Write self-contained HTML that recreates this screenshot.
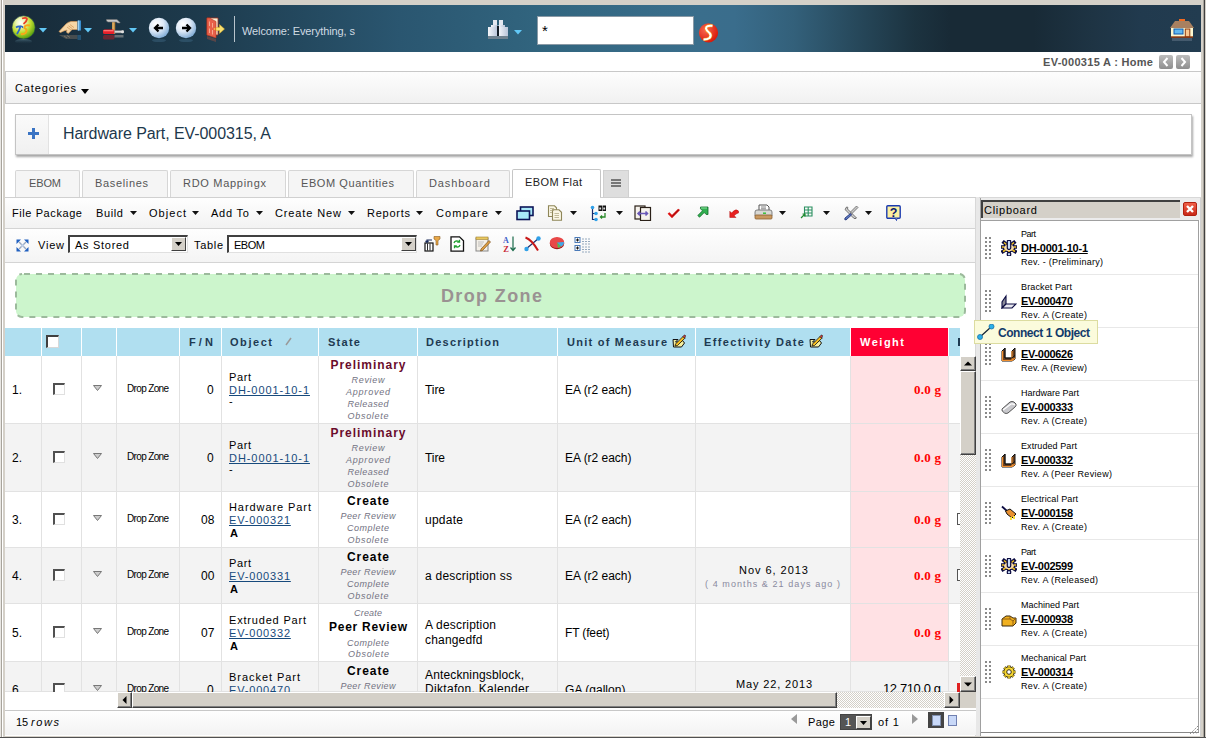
<!DOCTYPE html><html><head><meta charset="utf-8"><style>*{margin:0;padding:0;box-sizing:border-box}html,body{width:1206px;height:738px;overflow:hidden;background:#d4d0c8;position:relative;font-family:"Liberation Sans",sans-serif}.a{position:absolute}.t{white-space:nowrap}</style></head><body>
<div class="a" style="left:0px;top:0px;width:1206px;height:738px;background:#d4d0c8"></div>
<div class="a" style="left:0px;top:0px;width:1px;height:738px;background:#e8e6e2"></div>
<div class="a" style="left:1px;top:0px;width:1px;height:738px;background:#a8a49c"></div>
<div class="a" style="left:2px;top:0px;width:1px;height:738px;background:#fff"></div>
<div class="a" style="left:1203px;top:0px;width:1px;height:738px;background:#a8a49c"></div>
<div class="a" style="left:1204px;top:0px;width:1px;height:738px;background:#404040"></div>
<div class="a" style="left:0px;top:737px;width:1206px;height:1px;background:#505050"></div>
<div class="a" style="left:5px;top:5px;width:1196px;height:47px;background:linear-gradient(90deg,#172a38 0%,#1d3a4c 16%,#2a5670 33%,#326680 46%,#3a6e8c 58%,#3a6d8c 61%,#33607a 66%,#27495c 71%,#1c3340 76%,#182a36 79%,#182a36 86%,#1e3444 91%,#213a4e 95%,#223c50 100%)"></div>
<div class="a" style="left:5px;top:52px;width:1196px;height:684px;background:#fff"></div>
<div class="a" style="left:5px;top:71px;width:1196px;height:33px;background:linear-gradient(#fdfdfd,#f1f1f1);border:1px solid #c8c8c8;border-right:none"></div>
<div class="a" style="left:15px;top:114px;width:1177px;height:41px;background:#fff;border:1px solid #c4c4c4;box-shadow:1px 2px 2px rgba(0,0,0,.35)"></div>
<div class="a" style="left:16px;top:115px;width:33px;height:39px;background:linear-gradient(#fafafa,#f0f0f0);border-right:1px solid #e2e2e2"></div>
<div class="a" style="left:15px;top:170px;width:65px;height:28px;background:#f5f5f5;border:1px solid #d6d6d6;border-bottom:none;border-radius:2px 2px 0 0"></div>
<div class="a" style="left:82px;top:170px;width:86px;height:28px;background:#f5f5f5;border:1px solid #d6d6d6;border-bottom:none;border-radius:2px 2px 0 0"></div>
<div class="a" style="left:170px;top:170px;width:116px;height:28px;background:#f5f5f5;border:1px solid #d6d6d6;border-bottom:none;border-radius:2px 2px 0 0"></div>
<div class="a" style="left:288px;top:170px;width:126px;height:28px;background:#f5f5f5;border:1px solid #d6d6d6;border-bottom:none;border-radius:2px 2px 0 0"></div>
<div class="a" style="left:416px;top:170px;width:94px;height:28px;background:#f5f5f5;border:1px solid #d6d6d6;border-bottom:none;border-radius:2px 2px 0 0"></div>
<div class="a" style="left:512px;top:169px;width:89px;height:29px;background:#fff;border:1px solid #c6c6c6;border-bottom:none;border-radius:2px 2px 0 0"></div>
<div class="a" style="left:603px;top:170px;width:26px;height:28px;background:#dedede;border:1px solid #d0d0d0;border-bottom:none"></div>
<div class="a" style="left:5px;top:197px;width:972px;height:1px;background:#d0d0d0"></div>
<div class="a" style="left:5px;top:198px;width:971px;height:31px;background:linear-gradient(#fefefe,#f2f2f2)"></div>
<div class="a" style="left:5px;top:228px;width:971px;height:1px;background:#d4d4d4"></div>
<div class="a" style="left:5px;top:229px;width:971px;height:33px;background:linear-gradient(#fefefe,#f4f4f4)"></div>
<div class="a" style="left:5px;top:262px;width:971px;height:1px;background:#d4d4d4"></div>
<div class="a" style="left:975px;top:198px;width:1px;height:538px;background:#d8d8d8"></div>
<svg class="a" style="left:15px;top:273px" width="951" height="45"><rect x="1" y="1" width="949" height="43" rx="6" fill="#ccf5cc" stroke="#9cba9c" stroke-width="2" stroke-dasharray="6 6" stroke-dashoffset="-2"/></svg>
<div class="a" style="left:5px;top:328px;width:955px;height:28px;background:#b0dff0"></div>
<div class="a" style="left:41px;top:328px;width:1px;height:28px;background:#fff"></div>
<div class="a" style="left:81px;top:328px;width:1px;height:28px;background:#fff"></div>
<div class="a" style="left:116px;top:328px;width:1px;height:28px;background:#fff"></div>
<div class="a" style="left:179px;top:328px;width:1px;height:28px;background:#fff"></div>
<div class="a" style="left:221px;top:328px;width:1px;height:28px;background:#fff"></div>
<div class="a" style="left:318px;top:328px;width:1px;height:28px;background:#fff"></div>
<div class="a" style="left:417px;top:328px;width:1px;height:28px;background:#fff"></div>
<div class="a" style="left:557px;top:328px;width:1px;height:28px;background:#fff"></div>
<div class="a" style="left:695px;top:328px;width:1px;height:28px;background:#fff"></div>
<div class="a" style="left:850px;top:328px;width:1px;height:28px;background:#fff"></div>
<div class="a" style="left:851px;top:328px;width:97px;height:28px;background:#ff0033"></div>
<div class="a" style="left:948px;top:328px;width:1px;height:28px;background:#fff"></div>
<div class="a" style="left:5px;top:356px;width:955px;height:68px;background:#fff"></div>
<div class="a" style="left:5px;top:423px;width:955px;height:1px;background:#e2e2e2"></div>
<div class="a" style="left:5px;top:424px;width:955px;height:68px;background:#f3f3f3"></div>
<div class="a" style="left:5px;top:491px;width:955px;height:1px;background:#e2e2e2"></div>
<div class="a" style="left:5px;top:492px;width:955px;height:56px;background:#fff"></div>
<div class="a" style="left:5px;top:547px;width:955px;height:1px;background:#e2e2e2"></div>
<div class="a" style="left:5px;top:548px;width:955px;height:56px;background:#f3f3f3"></div>
<div class="a" style="left:5px;top:603px;width:955px;height:1px;background:#e2e2e2"></div>
<div class="a" style="left:5px;top:604px;width:955px;height:58px;background:#fff"></div>
<div class="a" style="left:5px;top:661px;width:955px;height:1px;background:#e2e2e2"></div>
<div class="a" style="left:5px;top:662px;width:955px;height:30px;background:#f3f3f3"></div>
<div class="a" style="left:5px;top:691px;width:955px;height:1px;background:#e2e2e2"></div>
<div class="a" style="left:850px;top:356px;width:99px;height:67px;background:#ffe1e4"></div>
<div class="a" style="left:850px;top:424px;width:99px;height:67px;background:#ffe1e4"></div>
<div class="a" style="left:850px;top:492px;width:99px;height:55px;background:#ffe1e4"></div>
<div class="a" style="left:850px;top:548px;width:99px;height:55px;background:#ffe1e4"></div>
<div class="a" style="left:850px;top:604px;width:99px;height:57px;background:#ffe1e4"></div>
<div class="a" style="left:41px;top:356px;width:1px;height:336px;background:#e2e2e2"></div>
<div class="a" style="left:81px;top:356px;width:1px;height:336px;background:#e2e2e2"></div>
<div class="a" style="left:116px;top:356px;width:1px;height:336px;background:#e2e2e2"></div>
<div class="a" style="left:179px;top:356px;width:1px;height:336px;background:#e2e2e2"></div>
<div class="a" style="left:221px;top:356px;width:1px;height:336px;background:#e2e2e2"></div>
<div class="a" style="left:318px;top:356px;width:1px;height:336px;background:#e2e2e2"></div>
<div class="a" style="left:417px;top:356px;width:1px;height:336px;background:#e2e2e2"></div>
<div class="a" style="left:557px;top:356px;width:1px;height:336px;background:#e2e2e2"></div>
<div class="a" style="left:695px;top:356px;width:1px;height:336px;background:#e2e2e2"></div>
<div class="a" style="left:850px;top:356px;width:1px;height:336px;background:#e2e2e2"></div>
<div class="a" style="left:948px;top:356px;width:1px;height:336px;background:#e2e2e2"></div>
<div class="a" style="left:976px;top:197px;width:4px;height:539px;background:#e8e8e8"></div>
<div class="a" style="left:979px;top:197px;width:222px;height:1px;background:#d8d8d8"></div>
<div class="a" style="left:980px;top:198px;width:1px;height:538px;background:#a0a0a0"></div>
<div class="a" style="left:981px;top:198px;width:219px;height:22px;background:#ececec"></div>
<div class="a" style="left:981px;top:200px;width:199px;height:18px;background:#d4d0c8;border-top:2px solid #404040;border-left:2px solid #404040"></div>
<div class="a" style="left:981px;top:220px;width:218px;height:513px;background:#fff;border-top:1px solid #a0a0a0"></div>
<div class="a" style="left:1198px;top:220px;width:1px;height:513px;background:#a0a0a0"></div>
<div class="a" style="left:981px;top:732px;width:218px;height:1px;background:#888"></div>
<div class="a" style="left:1200px;top:198px;width:1px;height:538px;background:#d0d0d0"></div>
<div class="a" style="left:981px;top:274px;width:217px;height:1px;background:#e8e8e8"></div>
<div class="a" style="left:981px;top:327px;width:217px;height:1px;background:#e8e8e8"></div>
<div class="a" style="left:981px;top:380px;width:217px;height:1px;background:#e8e8e8"></div>
<div class="a" style="left:981px;top:433px;width:217px;height:1px;background:#e8e8e8"></div>
<div class="a" style="left:981px;top:486px;width:217px;height:1px;background:#e8e8e8"></div>
<div class="a" style="left:981px;top:539px;width:217px;height:1px;background:#e8e8e8"></div>
<div class="a" style="left:981px;top:592px;width:217px;height:1px;background:#e8e8e8"></div>
<div class="a" style="left:981px;top:645px;width:217px;height:1px;background:#e8e8e8"></div>
<div class="a" style="left:981px;top:698px;width:217px;height:1px;background:#e8e8e8"></div>
<div class="a t" id="t0" style="left:242px;top:26px;font:normal normal 11px/1 'Liberation Sans';color:#d0dae2;letter-spacing:-0.112px;">Welcome: Everything, s</div>
<div class="a" style="left:234px;top:16px;width:1px;height:26px;background:#b8c4cc"></div>
<div class="a" style="left:537px;top:16px;width:157px;height:29px;background:#fff;border:1px solid #8a9aa6"></div>
<div class="a t" id="t1" style="left:542px;top:23px;font:normal normal 15px/1 'Liberation Sans';color:#000;">*</div>
<div class="a t" id="t2" style="left:1043px;top:57px;font:normal bold 11px/1 'Liberation Sans';color:#555;letter-spacing:0.296px;">EV-000315 A : Home</div>
<div class="a" style="left:1159px;top:55px;width:14px;height:14px;background:linear-gradient(#bdbdbd,#8e8e8e);border-radius:2px"></div>
<div class="a" style="left:1176px;top:55px;width:14px;height:14px;background:linear-gradient(#bdbdbd,#8e8e8e);border-radius:2px"></div>
<div class="a t" id="t3" style="left:15px;top:83px;font:normal normal 11px/1 'Liberation Sans';color:#000;letter-spacing:0.866px;">Categories</div>
<svg class="a" style="left:81px;top:89px" width="8" height="5"><path d="M0 0H8L4 5Z" fill="#000"/></svg>
<svg class="a" style="left:28px;top:128px" width="11" height="11"><path d="M4 0H7V4H11V7H7V11H4V7H0V4H4Z" fill="#3a74c4"/></svg>
<div class="a t" id="t4" style="left:63px;top:126px;font:normal normal 16px/1 'Liberation Sans';color:#1d384c;letter-spacing:-0.073px;">Hardware Part, EV-000315, A</div>
<div class="a t" id="t5" style="left:29px;top:178px;font:normal normal 11px/1 'Liberation Sans';color:#555;letter-spacing:-0.135px;">EBOM</div>
<div class="a t" id="t6" style="left:95px;top:178px;font:normal normal 11px/1 'Liberation Sans';color:#555;letter-spacing:0.662px;">Baselines</div>
<div class="a t" id="t7" style="left:183px;top:178px;font:normal normal 11px/1 'Liberation Sans';color:#555;letter-spacing:0.709px;">RDO Mappingx</div>
<div class="a t" id="t8" style="left:301px;top:178px;font:normal normal 11px/1 'Liberation Sans';color:#555;letter-spacing:0.573px;">EBOM Quantities</div>
<div class="a t" id="t9" style="left:429px;top:178px;font:normal normal 11px/1 'Liberation Sans';color:#555;letter-spacing:0.896px;">Dashboard</div>
<div class="a t" id="t10" style="left:525px;top:177px;font:normal normal 11px/1 'Liberation Sans';color:#222;letter-spacing:0.400px;">EBOM Flat</div>
<div class="a" style="left:611px;top:179px;width:10px;height:2px;background:#777"></div>
<div class="a" style="left:611px;top:182px;width:10px;height:2px;background:#777"></div>
<div class="a" style="left:611px;top:185px;width:10px;height:2px;background:#777"></div>
<div class="a" style="left:513px;top:197px;width:87px;height:1px;background:#fff"></div>
<div class="a t" id="t11" style="left:12px;top:208px;font:normal normal 11px/1 'Liberation Sans';color:#000;letter-spacing:0.582px;">File Package</div>
<div class="a t" id="t12" style="left:96px;top:208px;font:normal normal 11px/1 'Liberation Sans';color:#000;letter-spacing:0.633px;">Build</div>
<svg class="a" style="left:130px;top:211px" width="7" height="4"><path d="M0 0H7L3.5 4Z" fill="#111"/></svg>
<div class="a t" id="t13" style="left:149px;top:208px;font:normal normal 11px/1 'Liberation Sans';color:#000;letter-spacing:1.041px;">Object</div>
<svg class="a" style="left:192px;top:211px" width="7" height="4"><path d="M0 0H7L3.5 4Z" fill="#111"/></svg>
<div class="a t" id="t14" style="left:211px;top:208px;font:normal normal 11px/1 'Liberation Sans';color:#000;letter-spacing:0.787px;">Add To</div>
<svg class="a" style="left:256px;top:211px" width="7" height="4"><path d="M0 0H7L3.5 4Z" fill="#111"/></svg>
<div class="a t" id="t15" style="left:275px;top:208px;font:normal normal 11px/1 'Liberation Sans';color:#000;letter-spacing:0.880px;">Create New</div>
<svg class="a" style="left:348px;top:211px" width="7" height="4"><path d="M0 0H7L3.5 4Z" fill="#111"/></svg>
<div class="a t" id="t16" style="left:367px;top:208px;font:normal normal 11px/1 'Liberation Sans';color:#000;letter-spacing:0.745px;">Reports</div>
<svg class="a" style="left:416px;top:211px" width="7" height="4"><path d="M0 0H7L3.5 4Z" fill="#111"/></svg>
<div class="a t" id="t17" style="left:436px;top:208px;font:normal normal 11px/1 'Liberation Sans';color:#000;letter-spacing:1.125px;">Compare</div>
<svg class="a" style="left:495px;top:211px" width="7" height="4"><path d="M0 0H7L3.5 4Z" fill="#111"/></svg>
<svg class="a" style="left:570px;top:211px" width="7" height="4"><path d="M0 0H7L3.5 4Z" fill="#111"/></svg>
<svg class="a" style="left:616px;top:211px" width="7" height="4"><path d="M0 0H7L3.5 4Z" fill="#111"/></svg>
<svg class="a" style="left:779px;top:211px" width="7" height="4"><path d="M0 0H7L3.5 4Z" fill="#111"/></svg>
<svg class="a" style="left:823px;top:211px" width="7" height="4"><path d="M0 0H7L3.5 4Z" fill="#111"/></svg>
<svg class="a" style="left:865px;top:211px" width="7" height="4"><path d="M0 0H7L3.5 4Z" fill="#111"/></svg>
<div class="a t" id="t18" style="left:38px;top:240px;font:normal normal 11px/1 'Liberation Sans';color:#000;letter-spacing:0.781px;">View</div>
<div class="a" style="left:68px;top:235px;width:120px;height:18px;background:#fff;border-style:solid;border-width:2px 1px 1px 2px;border-color:#404040 #e0e0e0 #e0e0e0 #404040"></div>
<div class="a t" id="t19" style="left:75px;top:240px;font:normal normal 11px/1 'Liberation Sans';color:#000;letter-spacing:0.711px;">As Stored</div>
<div class="a" style="left:171px;top:237px;width:15px;height:14px;background:#d4d0c8;border:1px solid;border-color:#fff #404040 #404040 #fff"></div>
<svg class="a" style="left:175px;top:242px" width="7" height="4"><path d="M0 0H7L3.5 4Z" fill="#000"/></svg>
<div class="a t" id="t20" style="left:194px;top:240px;font:normal normal 11px/1 'Liberation Sans';color:#000;letter-spacing:0.676px;">Table</div>
<div class="a" style="left:227px;top:235px;width:190px;height:18px;background:#fff;border-style:solid;border-width:2px 1px 1px 2px;border-color:#404040 #e0e0e0 #e0e0e0 #404040"></div>
<div class="a t" id="t21" style="left:234px;top:240px;font:normal normal 11px/1 'Liberation Sans';color:#000;letter-spacing:-0.469px;">EBOM</div>
<div class="a" style="left:401px;top:237px;width:15px;height:14px;background:#d4d0c8;border:1px solid;border-color:#fff #404040 #404040 #fff"></div>
<svg class="a" style="left:405px;top:242px" width="7" height="4"><path d="M0 0H7L3.5 4Z" fill="#000"/></svg>
<div class="a t" id="t22" style="left:441px;top:287px;font:normal bold 18px/1 'Liberation Sans';color:#9a9292;letter-spacing:1.375px;">Drop Zone</div>
<div class="a" style="left:46px;top:335px;width:13px;height:13px;background:#fff;border-style:solid;border-width:2px 1px 1px 2px;border-color:#404040 #d8d8d8 #d8d8d8 #404040"></div>
<div class="a t" id="t23" style="left:189px;top:337px;font:normal bold 11px/1 'Liberation Sans';color:#1e3a52;letter-spacing:3.133px;">F/N</div>
<div class="a t" id="t24" style="left:230px;top:337px;font:normal bold 11px/1 'Liberation Sans';color:#1e3a52;letter-spacing:1.553px;">Object</div>
<div class="a t" id="t25" style="left:328px;top:337px;font:normal bold 11px/1 'Liberation Sans';color:#1e3a52;letter-spacing:1.273px;">State</div>
<div class="a t" id="t26" style="left:426px;top:337px;font:normal bold 11px/1 'Liberation Sans';color:#1e3a52;letter-spacing:1.248px;">Description</div>
<div class="a t" id="t27" style="left:567px;top:337px;font:normal bold 11px/1 'Liberation Sans';color:#1e3a52;letter-spacing:1.249px;">Unit of Measure</div>
<div class="a t" id="t28" style="left:704px;top:337px;font:normal bold 11px/1 'Liberation Sans';color:#1e3a52;letter-spacing:1.368px;">Effectivity Date</div>
<div class="a t" id="t29" style="left:860px;top:337px;font:normal bold 11px/1 'Liberation Sans';color:#fff;letter-spacing:1.506px;">Weight</div>
<svg class="a" style="left:285px;top:337px" width="7" height="9"><path d="M1 8L6 1" stroke="#999" stroke-width="1.5"/></svg>
<div class="a t" id="t30" style="left:12px;top:384px;font:normal normal 12px/1 'Liberation Sans';color:#000;">1.</div>
<div class="a" style="left:53px;top:383px;width:12px;height:12px;background:#fff;border-style:solid;border-width:2px 1px 1px 2px;border-color:#505050 #e0e0e0 #e0e0e0 #505050"></div>
<svg class="a" style="left:93px;top:385px" width="9" height="6"><path d="M0.5 0.5H8.5L4.5 5.5Z" fill="#ccc" stroke="#777"/></svg>
<div class="a t" id="t31" style="left:127px;top:384px;font:normal normal 10px/1 'Liberation Sans';color:#000;letter-spacing:-0.656px;">Drop Zone</div>
<div class="a t" id="t32" style="left:207px;top:384px;font:normal normal 12px/1 'Liberation Sans';color:#000;">0</div>
<div class="a t" id="t33" style="left:229px;top:372px;font:normal normal 11px/1 'Liberation Sans';color:#000;letter-spacing:0.604px;">Part</div>
<div class="a t" id="t34" style="left:229px;top:385px;font:normal normal 11px/1 'Liberation Sans';color:#174a7c;letter-spacing:0.936px;text-decoration:underline;">DH-0001-10-1</div>
<div class="a t" id="t35" style="left:229px;top:396px;font:normal normal 11px/1 'Liberation Sans';color:#000;">-</div>
<div class="a t" id="t36" style="left:425px;top:384px;font:normal normal 12px/1 'Liberation Sans';color:#000;letter-spacing:-0.078px;">Tire</div>
<div class="a t" id="t37" style="left:565px;top:384px;font:normal normal 12px/1 'Liberation Sans';color:#000;letter-spacing:-0.018px;">EA (r2 each)</div>
<div class="a t" id="t38" style="left:914px;top:383px;font:normal bold 13px/1 'Liberation Serif';color:#f00;letter-spacing:0.250px;">0.0 g</div>
<div class="a t" id="t39" style="left:12px;top:452px;font:normal normal 12px/1 'Liberation Sans';color:#000;">2.</div>
<div class="a" style="left:53px;top:451px;width:12px;height:12px;background:#fff;border-style:solid;border-width:2px 1px 1px 2px;border-color:#505050 #e0e0e0 #e0e0e0 #505050"></div>
<svg class="a" style="left:93px;top:453px" width="9" height="6"><path d="M0.5 0.5H8.5L4.5 5.5Z" fill="#ccc" stroke="#777"/></svg>
<div class="a t" id="t40" style="left:127px;top:452px;font:normal normal 10px/1 'Liberation Sans';color:#000;letter-spacing:-0.656px;">Drop Zone</div>
<div class="a t" id="t41" style="left:207px;top:452px;font:normal normal 12px/1 'Liberation Sans';color:#000;">0</div>
<div class="a t" id="t42" style="left:229px;top:440px;font:normal normal 11px/1 'Liberation Sans';color:#000;letter-spacing:0.604px;">Part</div>
<div class="a t" id="t43" style="left:229px;top:453px;font:normal normal 11px/1 'Liberation Sans';color:#174a7c;letter-spacing:0.936px;text-decoration:underline;">DH-0001-10-1</div>
<div class="a t" id="t44" style="left:229px;top:464px;font:normal normal 11px/1 'Liberation Sans';color:#000;">-</div>
<div class="a t" id="t45" style="left:425px;top:452px;font:normal normal 12px/1 'Liberation Sans';color:#000;letter-spacing:-0.078px;">Tire</div>
<div class="a t" id="t46" style="left:565px;top:452px;font:normal normal 12px/1 'Liberation Sans';color:#000;letter-spacing:-0.018px;">EA (r2 each)</div>
<div class="a t" id="t47" style="left:914px;top:451px;font:normal bold 13px/1 'Liberation Serif';color:#f00;letter-spacing:0.250px;">0.0 g</div>
<div class="a t" id="t48" style="left:12px;top:514px;font:normal normal 12px/1 'Liberation Sans';color:#000;">3.</div>
<div class="a" style="left:53px;top:513px;width:12px;height:12px;background:#fff;border-style:solid;border-width:2px 1px 1px 2px;border-color:#505050 #e0e0e0 #e0e0e0 #505050"></div>
<svg class="a" style="left:93px;top:515px" width="9" height="6"><path d="M0.5 0.5H8.5L4.5 5.5Z" fill="#ccc" stroke="#777"/></svg>
<div class="a t" id="t49" style="left:127px;top:514px;font:normal normal 10px/1 'Liberation Sans';color:#000;letter-spacing:-0.656px;">Drop Zone</div>
<div class="a t" id="t50" style="left:201px;top:514px;font:normal normal 12px/1 'Liberation Sans';color:#000;">08</div>
<div class="a t" id="t51" style="left:229px;top:502px;font:normal normal 11px/1 'Liberation Sans';color:#000;letter-spacing:0.923px;">Hardware Part</div>
<div class="a t" id="t52" style="left:229px;top:515px;font:normal normal 11px/1 'Liberation Sans';color:#174a7c;letter-spacing:0.820px;text-decoration:underline;">EV-000321</div>
<div class="a t" id="t53" style="left:230px;top:528px;font:normal bold 11px/1 'Liberation Sans';color:#000;">A</div>
<div class="a t" id="t54" style="left:425px;top:514px;font:normal normal 12px/1 'Liberation Sans';color:#000;letter-spacing:0.259px;">update</div>
<div class="a t" id="t55" style="left:565px;top:514px;font:normal normal 12px/1 'Liberation Sans';color:#000;letter-spacing:-0.018px;">EA (r2 each)</div>
<div class="a t" id="t56" style="left:914px;top:513px;font:normal bold 13px/1 'Liberation Serif';color:#f00;letter-spacing:0.250px;">0.0 g</div>
<div class="a t" id="t57" style="left:12px;top:570px;font:normal normal 12px/1 'Liberation Sans';color:#000;">4.</div>
<div class="a" style="left:53px;top:569px;width:12px;height:12px;background:#fff;border-style:solid;border-width:2px 1px 1px 2px;border-color:#505050 #e0e0e0 #e0e0e0 #505050"></div>
<svg class="a" style="left:93px;top:571px" width="9" height="6"><path d="M0.5 0.5H8.5L4.5 5.5Z" fill="#ccc" stroke="#777"/></svg>
<div class="a t" id="t58" style="left:127px;top:570px;font:normal normal 10px/1 'Liberation Sans';color:#000;letter-spacing:-0.656px;">Drop Zone</div>
<div class="a t" id="t59" style="left:201px;top:570px;font:normal normal 12px/1 'Liberation Sans';color:#000;">00</div>
<div class="a t" id="t60" style="left:229px;top:558px;font:normal normal 11px/1 'Liberation Sans';color:#000;letter-spacing:0.604px;">Part</div>
<div class="a t" id="t61" style="left:229px;top:571px;font:normal normal 11px/1 'Liberation Sans';color:#174a7c;letter-spacing:0.820px;text-decoration:underline;">EV-000331</div>
<div class="a t" id="t62" style="left:230px;top:584px;font:normal bold 11px/1 'Liberation Sans';color:#000;">A</div>
<div class="a t" id="t63" style="left:425px;top:570px;font:normal normal 12px/1 'Liberation Sans';color:#000;letter-spacing:0.242px;">a description ss</div>
<div class="a t" id="t64" style="left:565px;top:570px;font:normal normal 12px/1 'Liberation Sans';color:#000;letter-spacing:-0.018px;">EA (r2 each)</div>
<div class="a t" id="t65" style="left:914px;top:569px;font:normal bold 13px/1 'Liberation Serif';color:#f00;letter-spacing:0.250px;">0.0 g</div>
<div class="a t" id="t66" style="left:12px;top:627px;font:normal normal 12px/1 'Liberation Sans';color:#000;">5.</div>
<div class="a" style="left:53px;top:626px;width:12px;height:12px;background:#fff;border-style:solid;border-width:2px 1px 1px 2px;border-color:#505050 #e0e0e0 #e0e0e0 #505050"></div>
<svg class="a" style="left:93px;top:628px" width="9" height="6"><path d="M0.5 0.5H8.5L4.5 5.5Z" fill="#ccc" stroke="#777"/></svg>
<div class="a t" id="t67" style="left:127px;top:627px;font:normal normal 10px/1 'Liberation Sans';color:#000;letter-spacing:-0.656px;">Drop Zone</div>
<div class="a t" id="t68" style="left:201px;top:627px;font:normal normal 12px/1 'Liberation Sans';color:#000;">07</div>
<div class="a t" id="t69" style="left:229px;top:615px;font:normal normal 11px/1 'Liberation Sans';color:#000;letter-spacing:0.811px;">Extruded Part</div>
<div class="a t" id="t70" style="left:229px;top:628px;font:normal normal 11px/1 'Liberation Sans';color:#174a7c;letter-spacing:0.820px;text-decoration:underline;">EV-000332</div>
<div class="a t" id="t71" style="left:230px;top:641px;font:normal bold 11px/1 'Liberation Sans';color:#000;">A</div>
<div class="a t" id="t72" style="left:425px;top:619px;font:normal normal 12px/1 'Liberation Sans';color:#000;letter-spacing:0.190px;">A description</div>
<div class="a t" id="t73" style="left:425px;top:633.5px;font:normal normal 12px/1 'Liberation Sans';color:#000;letter-spacing:0.180px;">changedfd</div>
<div class="a t" id="t74" style="left:565px;top:627px;font:normal normal 12px/1 'Liberation Sans';color:#000;letter-spacing:-0.150px;">FT (feet)</div>
<div class="a t" id="t75" style="left:914px;top:626px;font:normal bold 13px/1 'Liberation Serif';color:#f00;letter-spacing:0.250px;">0.0 g</div>
<div class="a t" id="t76" style="left:12px;top:684px;font:normal normal 12px/1 'Liberation Sans';color:#000;">6.</div>
<div class="a" style="left:53px;top:683px;width:12px;height:12px;background:#fff;border-style:solid;border-width:2px 1px 1px 2px;border-color:#505050 #e0e0e0 #e0e0e0 #505050"></div>
<svg class="a" style="left:93px;top:685px" width="9" height="6"><path d="M0.5 0.5H8.5L4.5 5.5Z" fill="#ccc" stroke="#777"/></svg>
<div class="a t" id="t77" style="left:127px;top:684px;font:normal normal 10px/1 'Liberation Sans';color:#000;letter-spacing:-0.656px;">Drop Zone</div>
<div class="a t" id="t78" style="left:207px;top:684px;font:normal normal 12px/1 'Liberation Sans';color:#000;">0</div>
<div class="a t" id="t79" style="left:229px;top:672px;font:normal normal 11px/1 'Liberation Sans';color:#000;letter-spacing:0.952px;">Bracket Part</div>
<div class="a t" id="t80" style="left:229px;top:685px;font:normal normal 11px/1 'Liberation Sans';color:#174a7c;letter-spacing:0.820px;text-decoration:underline;">EV-000470</div>
<div class="a t" id="t81" style="left:230px;top:698px;font:normal bold 11px/1 'Liberation Sans';color:#000;">A</div>
<div class="a t" id="t82" style="left:425px;top:669px;font:normal normal 12px/1 'Liberation Sans';color:#000;letter-spacing:0.142px;">Anteckningsblock,</div>
<div class="a t" id="t83" style="left:425px;top:683px;font:normal normal 12px/1 'Liberation Sans';color:#000;letter-spacing:0.310px;">Diktafon, Kalender</div>
<div class="a t" id="t84" style="left:565px;top:684px;font:normal normal 12px/1 'Liberation Sans';color:#000;letter-spacing:0.047px;">GA (gallon)</div>
<div class="a t" id="t85" style="left:883px;top:682px;font:normal normal 13px/1 'Liberation Sans';color:#000;letter-spacing:-0.384px;">12 710.0 g</div>
<div class="a t" id="t86" style="left:330.5px;top:359px;font:normal bold 12px/1 'Liberation Sans';color:#6a0c2c;letter-spacing:0.963px;">Preliminary</div>
<div class="a t" id="t87" style="left:351.5px;top:376px;font:italic normal 9px/1 'Liberation Sans';color:#727282;letter-spacing:0.697px;">Review</div>
<div class="a t" id="t88" style="left:346.0px;top:388px;font:italic normal 9px/1 'Liberation Sans';color:#727282;letter-spacing:0.781px;">Approved</div>
<div class="a t" id="t89" style="left:347.5px;top:400px;font:italic normal 9px/1 'Liberation Sans';color:#727282;letter-spacing:0.424px;">Released</div>
<div class="a t" id="t90" style="left:347.5px;top:412px;font:italic normal 9px/1 'Liberation Sans';color:#727282;letter-spacing:0.710px;">Obsolete</div>
<div class="a t" id="t91" style="left:330.5px;top:427px;font:normal bold 12px/1 'Liberation Sans';color:#6a0c2c;letter-spacing:0.963px;">Preliminary</div>
<div class="a t" id="t92" style="left:351.5px;top:444px;font:italic normal 9px/1 'Liberation Sans';color:#727282;letter-spacing:0.697px;">Review</div>
<div class="a t" id="t93" style="left:346.0px;top:456px;font:italic normal 9px/1 'Liberation Sans';color:#727282;letter-spacing:0.781px;">Approved</div>
<div class="a t" id="t94" style="left:347.5px;top:468px;font:italic normal 9px/1 'Liberation Sans';color:#727282;letter-spacing:0.424px;">Released</div>
<div class="a t" id="t95" style="left:347.5px;top:480px;font:italic normal 9px/1 'Liberation Sans';color:#727282;letter-spacing:0.710px;">Obsolete</div>
<div class="a t" id="t96" style="left:347.0px;top:495px;font:normal bold 12px/1 'Liberation Sans';color:#000;letter-spacing:0.928px;">Create</div>
<div class="a t" id="t97" style="left:340.5px;top:512px;font:italic normal 9px/1 'Liberation Sans';color:#727282;letter-spacing:0.397px;">Peer Review</div>
<div class="a t" id="t98" style="left:347.0px;top:524px;font:italic normal 9px/1 'Liberation Sans';color:#727282;letter-spacing:0.496px;">Complete</div>
<div class="a t" id="t99" style="left:347.5px;top:536px;font:italic normal 9px/1 'Liberation Sans';color:#727282;letter-spacing:0.710px;">Obsolete</div>
<div class="a t" id="t100" style="left:347.0px;top:551px;font:normal bold 12px/1 'Liberation Sans';color:#000;letter-spacing:0.928px;">Create</div>
<div class="a t" id="t101" style="left:340.5px;top:568px;font:italic normal 9px/1 'Liberation Sans';color:#727282;letter-spacing:0.397px;">Peer Review</div>
<div class="a t" id="t102" style="left:347.0px;top:580px;font:italic normal 9px/1 'Liberation Sans';color:#727282;letter-spacing:0.496px;">Complete</div>
<div class="a t" id="t103" style="left:347.5px;top:592px;font:italic normal 9px/1 'Liberation Sans';color:#727282;letter-spacing:0.710px;">Obsolete</div>
<div class="a t" id="t104" style="left:347.0px;top:665px;font:normal bold 12px/1 'Liberation Sans';color:#000;letter-spacing:0.928px;">Create</div>
<div class="a t" id="t105" style="left:340.5px;top:682px;font:italic normal 9px/1 'Liberation Sans';color:#727282;letter-spacing:0.397px;">Peer Review</div>
<div class="a t" id="t106" style="left:354px;top:609px;font:italic normal 9px/1 'Liberation Sans';color:#727282;letter-spacing:0.197px;">Create</div>
<div class="a t" id="t107" style="left:329px;top:621px;font:normal bold 12px/1 'Liberation Sans';color:#000;letter-spacing:0.728px;">Peer Review</div>
<div class="a t" id="t108" style="left:347px;top:639px;font:italic normal 9px/1 'Liberation Sans';color:#727282;letter-spacing:0.496px;">Complete</div>
<div class="a t" id="t109" style="left:348px;top:650px;font:italic normal 9px/1 'Liberation Sans';color:#727282;letter-spacing:0.710px;">Obsolete</div>
<div class="a t" id="t110" style="left:739px;top:565px;font:normal normal 11px/1 'Liberation Sans';color:#000;letter-spacing:0.967px;">Nov 6, 2013</div>
<div class="a t" id="t111" style="left:705px;top:580px;font:normal normal 9px/1 'Liberation Sans';color:#8a8aa0;letter-spacing:1.077px;">( 4 months &amp; 21 days ago )</div>
<div class="a t" id="t112" style="left:736px;top:679px;font:normal normal 11px/1 'Liberation Sans';color:#000;letter-spacing:0.849px;">May 22, 2013</div>
<div class="a t" id="t118" style="left:984px;top:205px;font:normal normal 11px/1 'Liberation Sans';color:#000;letter-spacing:0.738px;">Clipboard</div>
<div class="a" style="left:1183px;top:202px;width:14px;height:14px;background:linear-gradient(#f06048,#c82818);border-radius:2px;border:1px solid #b02010"></div>
<svg class="a" style="left:1185px;top:204px" width="10" height="10"><path d="M2 2L8 8M8 2L2 8" stroke="#fff" stroke-width="2.4"/></svg>
<div class="a t" id="t119" style="left:1021px;top:230px;font:normal normal 9px/1 'Liberation Sans';color:#000;letter-spacing:-0.505px;">Part</div>
<div class="a t" id="t120" style="left:1021px;top:243px;font:normal bold 11px/1 'Liberation Sans';color:#000;letter-spacing:-0.246px;text-decoration:underline;">DH-0001-10-1</div>
<div class="a t" id="t121" style="left:1021px;top:258px;font:normal normal 9px/1 'Liberation Sans';color:#000;letter-spacing:0.271px;">Rev. - (Preliminary)</div>
<div class="a" style="left:985px;top:237px;width:2px;height:2px;background:#8a8a8a"></div>
<div class="a" style="left:989px;top:237px;width:2px;height:2px;background:#8a8a8a"></div>
<div class="a" style="left:985px;top:241px;width:2px;height:2px;background:#8a8a8a"></div>
<div class="a" style="left:989px;top:241px;width:2px;height:2px;background:#8a8a8a"></div>
<div class="a" style="left:985px;top:245px;width:2px;height:2px;background:#8a8a8a"></div>
<div class="a" style="left:989px;top:245px;width:2px;height:2px;background:#8a8a8a"></div>
<div class="a" style="left:985px;top:249px;width:2px;height:2px;background:#8a8a8a"></div>
<div class="a" style="left:989px;top:249px;width:2px;height:2px;background:#8a8a8a"></div>
<div class="a" style="left:985px;top:253px;width:2px;height:2px;background:#8a8a8a"></div>
<div class="a" style="left:989px;top:253px;width:2px;height:2px;background:#8a8a8a"></div>
<div class="a" style="left:985px;top:257px;width:2px;height:2px;background:#8a8a8a"></div>
<div class="a" style="left:989px;top:257px;width:2px;height:2px;background:#8a8a8a"></div>
<div class="a t" id="t122" style="left:1021px;top:283px;font:normal normal 9px/1 'Liberation Sans';color:#000;letter-spacing:0.134px;">Bracket Part</div>
<div class="a t" id="t123" style="left:1021px;top:296px;font:normal bold 11px/1 'Liberation Sans';color:#000;letter-spacing:-0.305px;text-decoration:underline;">EV-000470</div>
<div class="a t" id="t124" style="left:1021px;top:311px;font:normal normal 9px/1 'Liberation Sans';color:#000;letter-spacing:0.367px;">Rev. A (Create)</div>
<div class="a" style="left:985px;top:290px;width:2px;height:2px;background:#8a8a8a"></div>
<div class="a" style="left:989px;top:290px;width:2px;height:2px;background:#8a8a8a"></div>
<div class="a" style="left:985px;top:294px;width:2px;height:2px;background:#8a8a8a"></div>
<div class="a" style="left:989px;top:294px;width:2px;height:2px;background:#8a8a8a"></div>
<div class="a" style="left:985px;top:298px;width:2px;height:2px;background:#8a8a8a"></div>
<div class="a" style="left:989px;top:298px;width:2px;height:2px;background:#8a8a8a"></div>
<div class="a" style="left:985px;top:302px;width:2px;height:2px;background:#8a8a8a"></div>
<div class="a" style="left:989px;top:302px;width:2px;height:2px;background:#8a8a8a"></div>
<div class="a" style="left:985px;top:306px;width:2px;height:2px;background:#8a8a8a"></div>
<div class="a" style="left:989px;top:306px;width:2px;height:2px;background:#8a8a8a"></div>
<div class="a" style="left:985px;top:310px;width:2px;height:2px;background:#8a8a8a"></div>
<div class="a" style="left:989px;top:310px;width:2px;height:2px;background:#8a8a8a"></div>
<div class="a t" id="t125" style="left:1021px;top:349px;font:normal bold 11px/1 'Liberation Sans';color:#000;letter-spacing:-0.305px;text-decoration:underline;">EV-000626</div>
<div class="a t" id="t126" style="left:1021px;top:364px;font:normal normal 9px/1 'Liberation Sans';color:#000;letter-spacing:0.189px;">Rev. A (Review)</div>
<div class="a" style="left:985px;top:343px;width:2px;height:2px;background:#8a8a8a"></div>
<div class="a" style="left:989px;top:343px;width:2px;height:2px;background:#8a8a8a"></div>
<div class="a" style="left:985px;top:347px;width:2px;height:2px;background:#8a8a8a"></div>
<div class="a" style="left:989px;top:347px;width:2px;height:2px;background:#8a8a8a"></div>
<div class="a" style="left:985px;top:351px;width:2px;height:2px;background:#8a8a8a"></div>
<div class="a" style="left:989px;top:351px;width:2px;height:2px;background:#8a8a8a"></div>
<div class="a" style="left:985px;top:355px;width:2px;height:2px;background:#8a8a8a"></div>
<div class="a" style="left:989px;top:355px;width:2px;height:2px;background:#8a8a8a"></div>
<div class="a" style="left:985px;top:359px;width:2px;height:2px;background:#8a8a8a"></div>
<div class="a" style="left:989px;top:359px;width:2px;height:2px;background:#8a8a8a"></div>
<div class="a" style="left:985px;top:363px;width:2px;height:2px;background:#8a8a8a"></div>
<div class="a" style="left:989px;top:363px;width:2px;height:2px;background:#8a8a8a"></div>
<div class="a t" id="t127" style="left:1021px;top:389px;font:normal normal 9px/1 'Liberation Sans';color:#000;letter-spacing:-0.003px;">Hardware Part</div>
<div class="a t" id="t128" style="left:1021px;top:402px;font:normal bold 11px/1 'Liberation Sans';color:#000;letter-spacing:-0.305px;text-decoration:underline;">EV-000333</div>
<div class="a t" id="t129" style="left:1021px;top:417px;font:normal normal 9px/1 'Liberation Sans';color:#000;letter-spacing:0.367px;">Rev. A (Create)</div>
<div class="a" style="left:985px;top:396px;width:2px;height:2px;background:#8a8a8a"></div>
<div class="a" style="left:989px;top:396px;width:2px;height:2px;background:#8a8a8a"></div>
<div class="a" style="left:985px;top:400px;width:2px;height:2px;background:#8a8a8a"></div>
<div class="a" style="left:989px;top:400px;width:2px;height:2px;background:#8a8a8a"></div>
<div class="a" style="left:985px;top:404px;width:2px;height:2px;background:#8a8a8a"></div>
<div class="a" style="left:989px;top:404px;width:2px;height:2px;background:#8a8a8a"></div>
<div class="a" style="left:985px;top:408px;width:2px;height:2px;background:#8a8a8a"></div>
<div class="a" style="left:989px;top:408px;width:2px;height:2px;background:#8a8a8a"></div>
<div class="a" style="left:985px;top:412px;width:2px;height:2px;background:#8a8a8a"></div>
<div class="a" style="left:989px;top:412px;width:2px;height:2px;background:#8a8a8a"></div>
<div class="a" style="left:985px;top:416px;width:2px;height:2px;background:#8a8a8a"></div>
<div class="a" style="left:989px;top:416px;width:2px;height:2px;background:#8a8a8a"></div>
<div class="a t" id="t130" style="left:1021px;top:442px;font:normal normal 9px/1 'Liberation Sans';color:#000;letter-spacing:0.081px;">Extruded Part</div>
<div class="a t" id="t131" style="left:1021px;top:455px;font:normal bold 11px/1 'Liberation Sans';color:#000;letter-spacing:-0.305px;text-decoration:underline;">EV-000332</div>
<div class="a t" id="t132" style="left:1021px;top:470px;font:normal normal 9px/1 'Liberation Sans';color:#000;letter-spacing:0.322px;">Rev. A (Peer Review)</div>
<div class="a" style="left:985px;top:449px;width:2px;height:2px;background:#8a8a8a"></div>
<div class="a" style="left:989px;top:449px;width:2px;height:2px;background:#8a8a8a"></div>
<div class="a" style="left:985px;top:453px;width:2px;height:2px;background:#8a8a8a"></div>
<div class="a" style="left:989px;top:453px;width:2px;height:2px;background:#8a8a8a"></div>
<div class="a" style="left:985px;top:457px;width:2px;height:2px;background:#8a8a8a"></div>
<div class="a" style="left:989px;top:457px;width:2px;height:2px;background:#8a8a8a"></div>
<div class="a" style="left:985px;top:461px;width:2px;height:2px;background:#8a8a8a"></div>
<div class="a" style="left:989px;top:461px;width:2px;height:2px;background:#8a8a8a"></div>
<div class="a" style="left:985px;top:465px;width:2px;height:2px;background:#8a8a8a"></div>
<div class="a" style="left:989px;top:465px;width:2px;height:2px;background:#8a8a8a"></div>
<div class="a" style="left:985px;top:469px;width:2px;height:2px;background:#8a8a8a"></div>
<div class="a" style="left:989px;top:469px;width:2px;height:2px;background:#8a8a8a"></div>
<div class="a t" id="t133" style="left:1021px;top:495px;font:normal normal 9px/1 'Liberation Sans';color:#000;letter-spacing:0.105px;">Electrical Part</div>
<div class="a t" id="t134" style="left:1021px;top:508px;font:normal bold 11px/1 'Liberation Sans';color:#000;letter-spacing:-0.305px;text-decoration:underline;">EV-000158</div>
<div class="a t" id="t135" style="left:1021px;top:523px;font:normal normal 9px/1 'Liberation Sans';color:#000;letter-spacing:0.367px;">Rev. A (Create)</div>
<div class="a" style="left:985px;top:502px;width:2px;height:2px;background:#8a8a8a"></div>
<div class="a" style="left:989px;top:502px;width:2px;height:2px;background:#8a8a8a"></div>
<div class="a" style="left:985px;top:506px;width:2px;height:2px;background:#8a8a8a"></div>
<div class="a" style="left:989px;top:506px;width:2px;height:2px;background:#8a8a8a"></div>
<div class="a" style="left:985px;top:510px;width:2px;height:2px;background:#8a8a8a"></div>
<div class="a" style="left:989px;top:510px;width:2px;height:2px;background:#8a8a8a"></div>
<div class="a" style="left:985px;top:514px;width:2px;height:2px;background:#8a8a8a"></div>
<div class="a" style="left:989px;top:514px;width:2px;height:2px;background:#8a8a8a"></div>
<div class="a" style="left:985px;top:518px;width:2px;height:2px;background:#8a8a8a"></div>
<div class="a" style="left:989px;top:518px;width:2px;height:2px;background:#8a8a8a"></div>
<div class="a" style="left:985px;top:522px;width:2px;height:2px;background:#8a8a8a"></div>
<div class="a" style="left:989px;top:522px;width:2px;height:2px;background:#8a8a8a"></div>
<div class="a t" id="t136" style="left:1021px;top:548px;font:normal normal 9px/1 'Liberation Sans';color:#000;letter-spacing:-0.505px;">Part</div>
<div class="a t" id="t137" style="left:1021px;top:561px;font:normal bold 11px/1 'Liberation Sans';color:#000;letter-spacing:-0.305px;text-decoration:underline;">EV-002599</div>
<div class="a t" id="t138" style="left:1021px;top:576px;font:normal normal 9px/1 'Liberation Sans';color:#000;letter-spacing:0.320px;">Rev. A (Released)</div>
<div class="a" style="left:985px;top:555px;width:2px;height:2px;background:#8a8a8a"></div>
<div class="a" style="left:989px;top:555px;width:2px;height:2px;background:#8a8a8a"></div>
<div class="a" style="left:985px;top:559px;width:2px;height:2px;background:#8a8a8a"></div>
<div class="a" style="left:989px;top:559px;width:2px;height:2px;background:#8a8a8a"></div>
<div class="a" style="left:985px;top:563px;width:2px;height:2px;background:#8a8a8a"></div>
<div class="a" style="left:989px;top:563px;width:2px;height:2px;background:#8a8a8a"></div>
<div class="a" style="left:985px;top:567px;width:2px;height:2px;background:#8a8a8a"></div>
<div class="a" style="left:989px;top:567px;width:2px;height:2px;background:#8a8a8a"></div>
<div class="a" style="left:985px;top:571px;width:2px;height:2px;background:#8a8a8a"></div>
<div class="a" style="left:989px;top:571px;width:2px;height:2px;background:#8a8a8a"></div>
<div class="a" style="left:985px;top:575px;width:2px;height:2px;background:#8a8a8a"></div>
<div class="a" style="left:989px;top:575px;width:2px;height:2px;background:#8a8a8a"></div>
<div class="a t" id="t139" style="left:1021px;top:601px;font:normal normal 9px/1 'Liberation Sans';color:#000;letter-spacing:-0.003px;">Machined Part</div>
<div class="a t" id="t140" style="left:1021px;top:614px;font:normal bold 11px/1 'Liberation Sans';color:#000;letter-spacing:-0.305px;text-decoration:underline;">EV-000938</div>
<div class="a t" id="t141" style="left:1021px;top:629px;font:normal normal 9px/1 'Liberation Sans';color:#000;letter-spacing:0.367px;">Rev. A (Create)</div>
<div class="a" style="left:985px;top:608px;width:2px;height:2px;background:#8a8a8a"></div>
<div class="a" style="left:989px;top:608px;width:2px;height:2px;background:#8a8a8a"></div>
<div class="a" style="left:985px;top:612px;width:2px;height:2px;background:#8a8a8a"></div>
<div class="a" style="left:989px;top:612px;width:2px;height:2px;background:#8a8a8a"></div>
<div class="a" style="left:985px;top:616px;width:2px;height:2px;background:#8a8a8a"></div>
<div class="a" style="left:989px;top:616px;width:2px;height:2px;background:#8a8a8a"></div>
<div class="a" style="left:985px;top:620px;width:2px;height:2px;background:#8a8a8a"></div>
<div class="a" style="left:989px;top:620px;width:2px;height:2px;background:#8a8a8a"></div>
<div class="a" style="left:985px;top:624px;width:2px;height:2px;background:#8a8a8a"></div>
<div class="a" style="left:989px;top:624px;width:2px;height:2px;background:#8a8a8a"></div>
<div class="a" style="left:985px;top:628px;width:2px;height:2px;background:#8a8a8a"></div>
<div class="a" style="left:989px;top:628px;width:2px;height:2px;background:#8a8a8a"></div>
<div class="a t" id="t142" style="left:1021px;top:654px;font:normal normal 9px/1 'Liberation Sans';color:#000;letter-spacing:0.033px;">Mechanical Part</div>
<div class="a t" id="t143" style="left:1021px;top:667px;font:normal bold 11px/1 'Liberation Sans';color:#000;letter-spacing:-0.305px;text-decoration:underline;">EV-000314</div>
<div class="a t" id="t144" style="left:1021px;top:682px;font:normal normal 9px/1 'Liberation Sans';color:#000;letter-spacing:0.367px;">Rev. A (Create)</div>
<div class="a" style="left:985px;top:661px;width:2px;height:2px;background:#8a8a8a"></div>
<div class="a" style="left:989px;top:661px;width:2px;height:2px;background:#8a8a8a"></div>
<div class="a" style="left:985px;top:665px;width:2px;height:2px;background:#8a8a8a"></div>
<div class="a" style="left:989px;top:665px;width:2px;height:2px;background:#8a8a8a"></div>
<div class="a" style="left:985px;top:669px;width:2px;height:2px;background:#8a8a8a"></div>
<div class="a" style="left:989px;top:669px;width:2px;height:2px;background:#8a8a8a"></div>
<div class="a" style="left:985px;top:673px;width:2px;height:2px;background:#8a8a8a"></div>
<div class="a" style="left:989px;top:673px;width:2px;height:2px;background:#8a8a8a"></div>
<div class="a" style="left:985px;top:677px;width:2px;height:2px;background:#8a8a8a"></div>
<div class="a" style="left:989px;top:677px;width:2px;height:2px;background:#8a8a8a"></div>
<div class="a" style="left:985px;top:681px;width:2px;height:2px;background:#8a8a8a"></div>
<div class="a" style="left:989px;top:681px;width:2px;height:2px;background:#8a8a8a"></div>
<div class="a" style="left:974px;top:320px;width:124px;height:24px;background:#fbfbdc;border:1px solid #dcdca0"></div>
<svg class="a" style="left:977px;top:324px" width="18" height="16"><path d="M3 13L14 3" stroke="#123" stroke-width="1.2"/><circle cx="3" cy="13" r="2.5" fill="#2ab0e8" stroke="#1a70a8" stroke-width=".8"/><circle cx="14.5" cy="2.5" r="2.5" fill="#2ab0e8" stroke="#1a70a8" stroke-width=".8"/></svg>
<div class="a t" id="t145" style="left:998px;top:327px;font:normal bold 12px/1 'Liberation Sans';color:#133a6a;letter-spacing:-0.446px;">Connect 1 Object</div>
<svg class="a" style="left:11px;top:14px;" width="26" height="32" viewBox="0 0 26 32"><defs><radialGradient id="gg" cx="38%" cy="30%" r="70%"><stop offset="0" stop-color="#ffffff"/><stop offset=".25" stop-color="#eef8c0"/><stop offset=".6" stop-color="#c0dc30"/><stop offset="1" stop-color="#58a010"/></radialGradient>
<linearGradient id="gr" x1="0" y1="0" x2="0" y2="1"><stop offset="0" stop-color="#5a8090" stop-opacity=".7"/><stop offset="1" stop-color="#1a3040" stop-opacity="0"/></linearGradient></defs>
<circle cx="12.6" cy="13.4" r="11.6" fill="url(#gg)" stroke="#1a3850" stroke-width=".6"/>
<path d="M11 4.5Q15.5 3 16 5Q15.5 8 12.5 10" fill="none" stroke="#e8402a" stroke-width="1.8"/>
<path d="M19 11.5Q13 10.5 13.5 14Q17 15.5 14.5 19Q12.5 20.5 10 20" fill="none" stroke="#f8a818" stroke-width="2"/>
<path d="M6 20Q8.5 16 9.5 12.5Q7 12 5 13.5" fill="none" stroke="#2a68c8" stroke-width="1.8"/>
<path d="M9.5 12.5Q12 12 11.5 14" fill="none" stroke="#2a68c8" stroke-width="1.4"/>
<ellipse cx="12.5" cy="27.5" rx="8.5" ry="2.6" fill="url(#gr)"/></svg>
<svg class="a" style="left:39px;top:28px;" width="8" height="5" viewBox="0 0 8 5"><path d="M0 0H8L4 4.5Z" fill="#62c8f6"/></svg>
<svg class="a" style="left:58px;top:19px;" width="24" height="22" viewBox="0 0 24 22"><path d="M1 12.5L8 5Q10 3 13 2.5H19.5V10.5H14Q12 13 10 14.5L8.5 13L9 11Q6 11.5 2.5 13.5Z" fill="#f6d6a6" stroke="#d49a5a" stroke-width=".7"/>
<path d="M9 8L13 11M10.5 6.8L14.5 9.8M12 5.6L16 8.6" stroke="#d49a5a" stroke-width=".8"/>
<rect x="19.5" y="1.5" width="3.5" height="10" fill="#3a8ed0"/><rect x="20" y="1.5" width="1.3" height="10" fill="#9ad0f4"/>
<path d="M1 16L8 20H19.5V16H9Z" fill="#8a7a68" opacity=".4"/><path d="M6 17L9 19M9 16.5L12 18.5" stroke="#c8a880" stroke-width=".8" opacity=".5"/><rect x="19.5" y="16" width="3.5" height="5" fill="#2a6a98" opacity=".6"/></svg>
<svg class="a" style="left:84px;top:28px;" width="8" height="5" viewBox="0 0 8 5"><path d="M0 0H8L4 4.5Z" fill="#62c8f6"/></svg>
<svg class="a" style="left:102px;top:18px;" width="23" height="23" viewBox="0 0 23 23"><rect x="10" y="3" width="3.2" height="13" fill="#c0883a"/><rect x="10.6" y="3" width="1" height="13" fill="#e8c080"/>
<path d="M4.5 1.5H15L18 4.5V5H15.5L14.5 4H6L4.5 3Z" fill="#c8c8c8" stroke="#707070" stroke-width=".6"/>
<rect x="1" y="11.5" width="11.5" height="4.5" rx="1.5" fill="#e8202a"/><rect x="1.5" y="12" width="10" height="1.3" fill="#ff7070"/>
<rect x="12.5" y="12.7" width="9" height="2.2" fill="#d8d8d8" stroke="#888" stroke-width=".5"/><circle cx="20.5" cy="13.8" r="1.5" fill="#e0e0e0"/>
<rect x="1" y="17" width="11.5" height="4.5" rx="1.5" fill="#a02028" opacity=".6"/><rect x="12.5" y="17" width="9" height="2.5" fill="#999" opacity=".6"/></svg>
<svg class="a" style="left:129px;top:28px;" width="8" height="5" viewBox="0 0 8 5"><path d="M0 0H8L4 4.5Z" fill="#62c8f6"/></svg>
<svg class="a" style="left:148px;top:17px;" width="22" height="26" viewBox="0 0 22 26"><defs><radialGradient id="nc159" cx="35%" cy="30%" r="75%"><stop offset="0" stop-color="#ffffff"/><stop offset=".5" stop-color="#dce8f6"/><stop offset="1" stop-color="#7eaad4"/></radialGradient></defs>
<circle cx="11" cy="11" r="10.2" fill="url(#nc159)"/>
<path d="M7 11H15M10.5 7.5L7 11L10.5 14.5" fill="none" stroke="#000" stroke-width="2.3"/>
<ellipse cx="11" cy="23.5" rx="7" ry="1.6" fill="#4a7898" opacity=".35"/></svg>
<svg class="a" style="left:175px;top:17px;" width="22" height="26" viewBox="0 0 22 26"><defs><radialGradient id="nc186" cx="35%" cy="30%" r="75%"><stop offset="0" stop-color="#ffffff"/><stop offset=".5" stop-color="#dce8f6"/><stop offset="1" stop-color="#7eaad4"/></radialGradient></defs>
<circle cx="11" cy="11" r="10.2" fill="url(#nc186)"/>
<path d="M7 11H15M11.5 7.5L15 11L11.5 14.5" fill="none" stroke="#000" stroke-width="2.3"/>
<ellipse cx="11" cy="23.5" rx="7" ry="1.6" fill="#4a7898" opacity=".35"/></svg>
<svg class="a" style="left:206px;top:17px;" width="20" height="26" viewBox="0 0 20 26"><path d="M1 1H12V18H1Z" fill="#f8f0d8" stroke="#a03020" stroke-width=".8"/>
<path d="M1 1L3.5 1L10 4.5V21L1 18Z" fill="#e8604a" stroke="#b83820" stroke-width=".6"/>
<path d="M3.5 4.5V9M6.5 6V10.5M3.5 11.5V16M6.5 13V17.5" stroke="#f8a890" stroke-width="1"/>
<circle cx="8.5" cy="12" r=".8" fill="#f8e040"/>
<path d="M10 10.5H13.5V7.5L18.5 12L13.5 16.5V13.5H10Z" fill="#f8e070" stroke="#e8b020" stroke-width=".5"/>
<path d="M1 19L10 22V25L1 22Z" fill="#a05040" opacity=".45"/></svg>
<svg class="a" style="left:488px;top:19px;" width="22" height="23" viewBox="0 0 22 23"><defs><linearGradient id="bn" x1="0" x2="1"><stop offset="0" stop-color="#f4f6fa"/><stop offset="1" stop-color="#b8c4d8"/></linearGradient></defs>
<rect x="5" y="1" width="4" height="5" fill="#e4e8f0"/><rect x="11" y="1" width="4" height="5" fill="#e4e8f0"/>
<path d="M3 6H9.5V12.5H3Z" fill="url(#bn)"/><path d="M10.5 6H17V12.5H10.5Z" fill="url(#bn)"/>
<path d="M0 8H9.5V17H0Z" fill="url(#bn)"/><path d="M10.5 8H20V17H10.5Z" fill="url(#bn)"/>
<rect x="9" y="7" width="2" height="10" fill="#111a24"/>
<rect x="0" y="17" width="20" height="3" fill="#8a9098" opacity=".7"/></svg>
<svg class="a" style="left:514px;top:30px;" width="8" height="5" viewBox="0 0 8 5"><path d="M0 0H8L4 4.5Z" fill="#62c8f6"/></svg>
<svg class="a" style="left:698px;top:22px;" width="21" height="21" viewBox="0 0 21 21"><defs><radialGradient id="sr" cx="35%" cy="35%" r="70%"><stop offset="0" stop-color="#f86850"/><stop offset="1" stop-color="#d81808"/></radialGradient></defs>
<circle cx="10.5" cy="10.8" r="9.6" fill="url(#sr)"/>
<path d="M14.5 3.8Q8 3.2 8 6.5Q8.5 9 11.5 11Q13.8 13.5 11.5 16Q9.5 17.5 5.5 17.5" fill="none" stroke="#f8a020" stroke-width="3.2"/>
<path d="M14.5 3.8Q8 3.2 8 6.5Q8.5 9 11.5 11Q13.8 13.5 11.5 16Q9.5 17.5 5.5 17.5" fill="none" stroke="#fff" stroke-width="2"/></svg>
<svg class="a" style="left:1169px;top:18px;" width="26" height="24" viewBox="0 0 26 24"><rect x="10" y="1" width="6" height="2.2" fill="#f06a20"/>
<path d="M6 3H20L25 10H1Z" fill="#a88060"/>
<rect x="2" y="10" width="22" height="9" fill="#fcf8d0"/>
<rect x="5" y="11" width="9" height="5" fill="#60b8f0" stroke="#0a58b0" stroke-width="1"/>
<rect x="16.3" y="11" width="4.5" height="8" fill="#f8c890" stroke="#903a10" stroke-width="1"/>
<rect x="2" y="18.3" width="22" height="1.5" fill="#903a10"/>
<rect x="3" y="20" width="20" height="3" fill="#7a8a9a" opacity=".4"/></svg>
<svg class="a" style="left:516px;top:206px;" width="18" height="15" viewBox="0 0 18 15"><rect x="4.5" y="1" width="12.5" height="8.5" fill="#a8e8f8" stroke="#0c1458" stroke-width="1.6"/>
<rect x="1" y="5" width="12.5" height="8.5" fill="#a8e8f8" stroke="#0c1458" stroke-width="1.6"/></svg>
<svg class="a" style="left:547px;top:205px;" width="16" height="16" viewBox="0 0 16 16"><path d="M1.5 0.8H7.5L9.5 2.8V11.5H1.5Z" fill="#faf6e4" stroke="#8e8658" stroke-width="1.1"/>
<path d="M5.5 4.8H12L14.5 7.3V15.2H5.5Z" fill="#faf6e4" stroke="#8e8658" stroke-width="1.1"/>
<path d="M3 3.5H7M3 5.5H7M3 7.5H5M7.5 8.5H12M7.5 10.5H12M7.5 12.5H12" stroke="#a8a078" stroke-width=".7"/></svg>
<svg class="a" style="left:590px;top:205px;" width="19" height="17" viewBox="0 0 19 17"><path d="M2.5 2.5V14.5H6M2.5 8.5H6" fill="none" stroke="#1a2a6a" stroke-width="1.2"/>
<circle cx="2.5" cy="2.5" r="1.8" fill="#30a0e8"/><circle cx="6" cy="8.5" r="1.8" fill="#30a0e8"/><circle cx="6" cy="14.5" r="1.8" fill="#30a0e8"/>
<rect x="8.5" y="0.5" width="3.5" height="5.5" fill="#111"/><rect x="12.5" y="0.5" width="3.5" height="5.5" fill="#111"/>
<rect x="9.3" y="2.5" width="1.8" height="2" fill="#ddd"/><rect x="13.3" y="2.5" width="1.8" height="2" fill="#ddd"/>
<path d="M15 8V12H10.5M12 10.5L10.5 12L12 13.5" fill="none" stroke="#2a8a2a" stroke-width="1.3"/></svg>
<svg class="a" style="left:634px;top:205px;" width="18" height="16" viewBox="0 0 18 16"><rect x="1" y="1" width="10" height="13" fill="#f6f2ec" stroke="#2a2018" stroke-width="1.2"/>
<rect x="6.5" y="2.5" width="10" height="13" fill="#f6f2ec" stroke="#2a2018" stroke-width="1.2"/>
<path d="M4 8.5H13.5M6 6.5L4 8.5L6 10.5M11.5 6.5L13.5 8.5L11.5 10.5" fill="none" stroke="#6a58b8" stroke-width="1.6"/></svg>
<svg class="a" style="left:667px;top:208px;" width="13" height="10" viewBox="0 0 13 10"><path d="M1.5 5L5 8.5L12 1.5" fill="none" stroke="#e01010" stroke-width="2.4"/><path d="M5 8.5L12 1.5" stroke="#901010" stroke-width="1"/></svg>
<svg class="a" style="left:697px;top:206px;" width="12" height="13" viewBox="0 0 12 13"><path d="M0.8 9.5L5.5 4.8L3.5 2.8V1H11V8.5H9.2L7.2 6.5L2.5 11.2Z" fill="#30b050" stroke="#106a28" stroke-width=".8"/><path d="M4 2H10" stroke="#90e0a0" stroke-width="1"/></svg>
<svg class="a" style="left:726px;top:208px;" width="14" height="11" viewBox="0 0 14 11"><path d="M12.5 3Q10 0.5 7 3.5L5.5 5L3.8 3.3V9.5H10L8.2 7.7L9.5 6.5Q11 5 12.5 5Z" fill="#e82020" stroke="#b01010" stroke-width=".5"/></svg>
<svg class="a" style="left:754px;top:204px;" width="19" height="16" viewBox="0 0 19 16"><path d="M5 1H13L15 3V7H5Z" fill="#fff" stroke="#555" stroke-width="1"/>
<path d="M7 3H12M7 4.8H12" stroke="#555" stroke-width=".7"/>
<path d="M1 8Q1 6 3 6H16Q18 6 18 8V12H1Z" fill="#d8d8d4" stroke="#666" stroke-width=".8"/>
<rect x="1" y="11" width="17" height="4" rx="1" fill="#c89860" stroke="#8a6030" stroke-width=".8"/>
<rect x="9" y="8.5" width="3" height="1.4" fill="#30c030"/></svg>
<svg class="a" style="left:800px;top:206px;" width="13" height="13" viewBox="0 0 13 13"><path d="M4.5 1H12V10H4.5ZM4.5 4H12M4.5 7H12M8.2 1V10" fill="none" stroke="#2a9060" stroke-width="1.1"/>
<path d="M1 12L5 8M2.5 8H5V10.5" fill="none" stroke="#208a30" stroke-width="1.2"/></svg>
<svg class="a" style="left:843px;top:205px;" width="16" height="16" viewBox="0 0 16 16"><path d="M3 2.5Q1 5 4 6.5L10.5 13Q12 14.5 13.5 13L4.5 4Q5.5 1 3 2.5Z" fill="#d0d0d0" stroke="#555" stroke-width=".8"/>
<path d="M13.5 1L15 2.5L9 8.5L7.5 7Z" fill="#c8c8c8" stroke="#555" stroke-width=".7"/>
<path d="M7.5 8.5L2 13Q1 15 3 15L8.5 10Z" fill="#5a78c0" stroke="#1a2a70" stroke-width=".8"/></svg>
<svg class="a" style="left:886px;top:205px;" width="15" height="16" viewBox="0 0 15 16"><rect x="0.8" y="0.8" width="13.4" height="12.4" rx="1" fill="#fcf0a0" stroke="#1a3ab0" stroke-width="1.4"/>
<path d="M9 13L10.5 15.5L11 13" fill="#fcf0a0" stroke="#1a3ab0" stroke-width="1"/>
<text x="7.5" y="11.5" font-family="Liberation Sans" font-weight="bold" font-size="12.5" text-anchor="middle" fill="#0a1a70">?</text></svg>
<svg class="a" style="left:16px;top:239px;" width="13" height="13" viewBox="0 0 13 13"><path d="M3 3L10 10M10 3L3 10" stroke="#98a8c0" stroke-width="1.4"/><circle cx="6.5" cy="6.5" r="1.5" fill="#c0d0e8"/>
<path d="M0.5 0.5H5L0.5 5ZM12.5 0.5H8L12.5 5ZM0.5 12.5H5L0.5 8ZM12.5 12.5H8L12.5 8Z" fill="#2060c0"/></svg>
<svg class="a" style="left:424px;top:236px;" width="17" height="16" viewBox="0 0 17 16"><rect x="1" y="7" width="8" height="8" fill="#fff" stroke="#111" stroke-width="1.2"/>
<path d="M3.5 7.5V14.5M6 7.5V14.5" stroke="#111" stroke-width=".9"/>
<path d="M8 4H3V6M1.5 4.8L3 6.3L4.5 4.8" fill="none" stroke="#1a2a5a" stroke-width="1.2"/>
<path d="M10 0.5H16V3L14 4.5V9H12V4.5L10 3Z" fill="#e8a848" stroke="#8a5a20" stroke-width=".6"/></svg>
<svg class="a" style="left:450px;top:236px;" width="15" height="16" viewBox="0 0 15 16"><path d="M1 0.8H9.5L13.5 4.8V15.2H1Z" fill="#fff" stroke="#111" stroke-width="1.3"/>
<path d="M4 7Q5 4 9 5.5M9.5 3.8V6H7.2M10 9Q9 12 5 10.5M4.5 12.2V10H6.8" fill="none" stroke="#20a030" stroke-width="1.3"/></svg>
<svg class="a" style="left:475px;top:236px;" width="16" height="16" viewBox="0 0 16 16"><rect x="1" y="2" width="12" height="13" fill="#f4f0e8" stroke="#888" stroke-width="1"/>
<rect x="1" y="1" width="12" height="2.5" fill="#e8c860" stroke="#a08030" stroke-width=".6"/>
<path d="M3 6H9M3 8H8M3 10H7" stroke="#aaa" stroke-width=".7"/>
<path d="M6 13L14 4.5L15.5 6L7.5 14.5L5.5 15Z" fill="#e0a040" stroke="#7a5020" stroke-width=".7"/></svg>
<svg class="a" style="left:502px;top:236px;" width="15" height="16" viewBox="0 0 15 16"><text x="4" y="7" font-family="Liberation Serif" font-weight="bold" font-size="8" text-anchor="middle" fill="#3a5ac8">A</text>
<text x="4" y="15.5" font-family="Liberation Serif" font-weight="bold" font-size="8.5" text-anchor="middle" fill="#c82838">Z</text>
<path d="M11 0.5V14M8.5 11.5L11 14.5L13.5 11.5" fill="none" stroke="#1a6a4a" stroke-width="1.2"/></svg>
<svg class="a" style="left:524px;top:236px;" width="17" height="16" viewBox="0 0 17 16"><path d="M2 13L15 2" stroke="#1a2a6a" stroke-width="1.2"/>
<circle cx="2.5" cy="13" r="2.2" fill="#30a0e8"/><circle cx="14.5" cy="2.5" r="2.2" fill="#30a0e8"/>
<path d="M1.5 1.5Q8 4 14 14.5" fill="none" stroke="#c81818" stroke-width="2"/></svg>
<svg class="a" style="left:549px;top:236px;" width="16" height="14" viewBox="0 0 16 14"><ellipse cx="8" cy="7.5" rx="7.2" ry="5.8" fill="#a01818"/>
<ellipse cx="8" cy="6.5" rx="7.2" ry="5.5" fill="#e84848"/>
<path d="M8 6.5L15 6Q15 9 12 10.5Z" fill="#40a8e8"/><path d="M8 6.5L12 10.5L9 12Z" fill="#50c050"/></svg>
<svg class="a" style="left:574px;top:236px;" width="18" height="17" viewBox="0 0 18 17"><rect x="1" y="1.5" width="5" height="5" fill="#fff" stroke="#4a7ab8" stroke-width="1"/>
<rect x="1" y="9.5" width="5" height="5" fill="#fff" stroke="#4a7ab8" stroke-width="1"/>
<path d="M2 4H5M3.5 2.5V5.5M2 12H5M3.5 10.5V13.5" stroke="#111" stroke-width="1"/>
<path d="M8 3H17M8 5.5H17M8 8H17M8 11H17M8 13.5H17M8 16H17" stroke="#8aa0b8" stroke-width=".9" stroke-dasharray="2 1"/></svg>
<svg class="a" style="left:672px;top:334px;" width="14" height="14" viewBox="0 0 14 14"><path d="M1 5.5H6L3.5 8H9L10.5 6.5L12.5 9L9.5 13H1.5Z" fill="#f4f0a0" stroke="#111" stroke-width="1"/>
<path d="M3.5 10L11 2.5L12.8 4.3L5.5 11.5L3 12Z" fill="#f8c020" stroke="#111" stroke-width=".8"/>
<path d="M11 2.5L12 1.2Q13 0.8 13.6 1.6L12.8 4.3Z" fill="#e84040" stroke="#111" stroke-width=".6"/></svg>
<svg class="a" style="left:809px;top:334px;" width="14" height="14" viewBox="0 0 14 14"><path d="M1 5.5H6L3.5 8H9L10.5 6.5L12.5 9L9.5 13H1.5Z" fill="#f4f0a0" stroke="#111" stroke-width="1"/>
<path d="M3.5 10L11 2.5L12.8 4.3L5.5 11.5L3 12Z" fill="#f8c020" stroke="#111" stroke-width=".8"/>
<path d="M11 2.5L12 1.2Q13 0.8 13.6 1.6L12.8 4.3Z" fill="#e84040" stroke="#111" stroke-width=".6"/></svg>
<div class="a" style="left:958px;top:338px;width:2px;height:8px;background:#1e3a52"></div>
<div class="a" style="left:957px;top:513px;width:3px;height:12px;background:#fff;border:1px solid #555;border-right:none"></div>
<div class="a" style="left:957px;top:569px;width:3px;height:12px;background:#fff;border:1px solid #555;border-right:none"></div>
<div class="a" style="left:957px;top:683px;width:3px;height:9px;background:#e02020"></div>
<svg class="a" style="left:1001px;top:240px;" width="16" height="16" viewBox="0 0 16 16"><path d="M3 2.5L5.5 4.5M13 2.5L10.5 4.5M0.8 7H3M15.2 7H13M2 11.5L4.5 10M14 11.5L11.5 10M8 11V13" stroke="#0a0a40" stroke-width="3.6" stroke-linecap="square"/>
<ellipse cx="8" cy="7.8" rx="5.6" ry="4" fill="#f8dca8" stroke="#0a0a40" stroke-width="1.2"/>
<path d="M3 2.5L5.5 4.5M13 2.5L10.5 4.5M0.8 7H3M15.2 7H13M2 11.5L4.5 10M14 11.5L11.5 10M8 11V13" stroke="#f0c020" stroke-width="1.6"/>
<rect x="6.3" y="0.3" width="3.4" height="9" rx="1.2" fill="#c8dcf8" stroke="#0a0a40" stroke-width="1.2"/>
<rect x="6.3" y="12.6" width="3.4" height="3.2" rx="1" fill="#c8dcf8" stroke="#0a0a40" stroke-width="1.2"/></svg>
<svg class="a" style="left:1001px;top:293px;" width="16" height="16" viewBox="0 0 16 16"><path d="M1 9V15L5 11V3Z" fill="#8a8a98" stroke="#0a0a40" stroke-width="1.1"/><path d="M1 15H11L15 11H5Z" fill="#e8e8f0" stroke="#0a0a40" stroke-width="1.1"/></svg>
<svg class="a" style="left:1001px;top:346px;" width="16" height="16" viewBox="0 0 16 16"><path d="M1 5L4 2V12H11V5L14 2V13L11 15H1Z" fill="#6a4020" stroke="#111" stroke-width="1"/>
<path d="M1.5 5V14.5H11V5M11 14.5L14 12" fill="none" stroke="#f09030" stroke-width="1.2"/>
<path d="M4 2V12H11L14 9" fill="none" stroke="#111" stroke-width=".8"/></svg>
<svg class="a" style="left:1001px;top:399px;" width="16" height="16" viewBox="0 0 16 16"><path d="M1 10L9 3Q11 2 13 3L15 5Q15.5 7 14 8L7 14Q5 15 3.5 14L1.2 12Z" fill="#c8c8cc" stroke="#555" stroke-width="1"/><path d="M2 11L10 5Q12 4.5 14 6" fill="none" stroke="#fff" stroke-width="1.2"/></svg>
<svg class="a" style="left:1001px;top:452px;" width="16" height="16" viewBox="0 0 16 16"><path d="M1 5L4 2V12H11V5L14 2V13L11 15H1Z" fill="#6a4020" stroke="#111" stroke-width="1"/>
<path d="M1.5 5V14.5H11V5M11 14.5L14 12" fill="none" stroke="#f09030" stroke-width="1.2"/>
<path d="M4 2V12H11L14 9" fill="none" stroke="#111" stroke-width=".8"/></svg>
<svg class="a" style="left:1001px;top:505px;" width="16" height="16" viewBox="0 0 16 16"><path d="M1 1.5L6 6" stroke="#0a0a40" stroke-width="1.8"/><path d="M4.5 6L9 4L15 9L11 13L6 9Z" fill="#e89030" stroke="#111" stroke-width="1"/><path d="M10 12V15M13 11V14" stroke="#f8e040" stroke-width="2"/></svg>
<svg class="a" style="left:1001px;top:558px;" width="16" height="16" viewBox="0 0 16 16"><path d="M3 2.5L5.5 4.5M13 2.5L10.5 4.5M0.8 7H3M15.2 7H13M2 11.5L4.5 10M14 11.5L11.5 10M8 11V13" stroke="#0a0a40" stroke-width="3.6" stroke-linecap="square"/>
<ellipse cx="8" cy="7.8" rx="5.6" ry="4" fill="#f8dca8" stroke="#0a0a40" stroke-width="1.2"/>
<path d="M3 2.5L5.5 4.5M13 2.5L10.5 4.5M0.8 7H3M15.2 7H13M2 11.5L4.5 10M14 11.5L11.5 10M8 11V13" stroke="#f0c020" stroke-width="1.6"/>
<rect x="6.3" y="0.3" width="3.4" height="9" rx="1.2" fill="#c8dcf8" stroke="#0a0a40" stroke-width="1.2"/>
<rect x="6.3" y="12.6" width="3.4" height="3.2" rx="1" fill="#c8dcf8" stroke="#0a0a40" stroke-width="1.2"/></svg>
<svg class="a" style="left:1001px;top:611px;" width="16" height="16" viewBox="0 0 16 16"><path d="M1 8L5 5H9L12 7H15V12L12 15H1Z" fill="#f0b020" stroke="#3a2a10" stroke-width="1"/><path d="M1 8H9L12 10V15M9 8V5M12 10L15 7" fill="none" stroke="#8a5a10" stroke-width=".9"/></svg>
<svg class="a" style="left:1001px;top:664px;" width="16" height="16" viewBox="0 0 16 16"><path d="M8 1.5V3M3.4 3.4L4.5 4.5M12.6 3.4L11.5 4.5M1.5 8H3M13 8H14.5M3.4 12.6L4.5 11.5M12.6 12.6L11.5 11.5M8 13V14.5" stroke="#3a3010" stroke-width="3.2"/>
<circle cx="8" cy="8" r="5.3" fill="#f8d830" stroke="#3a3010" stroke-width="1"/>
<path d="M8 1.5V3M3.4 3.4L4.5 4.5M12.6 3.4L11.5 4.5M1.5 8H3M13 8H14.5M3.4 12.6L4.5 11.5M12.6 12.6L11.5 11.5M8 13V14.5" stroke="#f8d830" stroke-width="1.6"/>
<circle cx="8" cy="8" r="2.3" fill="#fff" stroke="#3a3010" stroke-width="1"/></svg>
<svg class="a" style="left:1188px;top:724px;" width="11" height="11" viewBox="0 0 11 11"><path d="M10 2L2 10M10 5L5 10M10 8L8 10" stroke="#888" stroke-width="1" stroke-dasharray="1.5 1"/></svg>
<svg class="a" style="left:1159px;top:55px;" width="14" height="14" viewBox="0 0 14 14"><path d="M8.5 3L5 7L8.5 11" fill="none" stroke="#fff" stroke-width="2"/></svg>
<svg class="a" style="left:1176px;top:55px;" width="14" height="14" viewBox="0 0 14 14"><path d="M5.5 3L9 7L5.5 11" fill="none" stroke="#fff" stroke-width="2"/></svg>
<div class="a" style="left:5px;top:692px;width:112px;height:16px;background:#fff"></div>
<div class="a" style="left:117px;top:692px;width:843px;height:16px;background:repeating-conic-gradient(#d4d0c8 0 25%,#fff 0 50%) 0 0/2px 2px"></div>
<div class="a" style="left:117px;top:692px;width:15px;height:16px;background:#d4d0c8;border-style:solid;border-width:1px;border-color:#fff #404040 #404040 #fff;box-shadow:inset -1px -1px #808080"></div>
<div class="a" style="left:132px;top:692px;width:705px;height:16px;background:#d4d0c8;border-style:solid;border-width:1px;border-color:#fff #404040 #404040 #fff;box-shadow:inset -1px -1px #808080"></div>
<div class="a" style="left:944px;top:692px;width:16px;height:16px;background:#d4d0c8;border-style:solid;border-width:1px;border-color:#fff #404040 #404040 #fff;box-shadow:inset -1px -1px #808080"></div>
<div class="a" style="left:960px;top:356px;width:16px;height:336px;background:repeating-conic-gradient(#d4d0c8 0 25%,#fff 0 50%) 0 0/2px 2px"></div>
<div class="a" style="left:960px;top:356px;width:16px;height:15px;background:#d4d0c8;border-style:solid;border-width:1px;border-color:#fff #404040 #404040 #fff;box-shadow:inset -1px -1px #808080"></div>
<div class="a" style="left:960px;top:371px;width:16px;height:84px;background:#d4d0c8;border-style:solid;border-width:1px;border-color:#fff #404040 #404040 #fff;box-shadow:inset -1px -1px #808080"></div>
<div class="a" style="left:960px;top:676px;width:16px;height:16px;background:#d4d0c8;border-style:solid;border-width:1px;border-color:#fff #404040 #404040 #fff;box-shadow:inset -1px -1px #808080"></div>
<div class="a" style="left:960px;top:692px;width:16px;height:16px;background:#d4d0c8"></div>
<div class="a" style="left:5px;top:708px;width:971px;height:2px;background:#fff"></div>
<div class="a" style="left:5px;top:710px;width:971px;height:1px;background:#c8c8c8"></div>
<div class="a" style="left:5px;top:711px;width:971px;height:24px;background:linear-gradient(#fefefe,#f3f3f3)"></div>
<div class="a t" id="t113" style="left:16px;top:717px;font:normal normal 11px/1 'Liberation Sans';color:#000;">15</div>
<div class="a t" id="t114" style="left:31px;top:717px;font:italic normal 11px/1 'Liberation Sans';color:#000;letter-spacing:1.589px;">rows</div>
<svg class="a" style="left:791px;top:714px" width="6" height="10"><path d="M6 0V10L0 5Z" fill="#999"/></svg>
<div class="a t" id="t115" style="left:808px;top:717px;font:normal normal 11px/1 'Liberation Sans';color:#000;letter-spacing:0.432px;">Page</div>
<div class="a" style="left:840px;top:714px;width:32px;height:16px;background:#555;border:1px solid #444"></div>
<div class="a t" id="t116" style="left:845px;top:717px;font:normal normal 11px/1 'Liberation Sans';color:#fff;">1</div>
<div class="a" style="left:856px;top:716px;width:15px;height:13px;background:#d4d0c8;border:1px solid;border-color:#fff #404040 #404040 #fff"></div>
<svg class="a" style="left:860px;top:721px" width="7" height="4"><path d="M0 0H7L3.5 4Z" fill="#000"/></svg>
<div class="a t" id="t117" style="left:878px;top:717px;font:normal normal 11px/1 'Liberation Sans';color:#000;letter-spacing:0.880px;">of 1</div>
<svg class="a" style="left:912px;top:714px" width="6" height="10"><path d="M0 0V10L6 5Z" fill="#999"/></svg>
<div class="a" style="left:928px;top:712px;width:16px;height:16px;background:#444"></div>
<div class="a" style="left:932px;top:715px;width:9px;height:11px;background:#c8d8f8;border:1px solid #8090b0"></div>
<div class="a" style="left:948px;top:715px;width:9px;height:11px;background:#c8d8f8;border:1px solid #7080b0"></div>
<svg class="a" style="left:964px;top:361px;" width="8" height="5" viewBox="0 0 8 5"><path d="M0 4.5H8L4 0.5Z" fill="#000"/></svg>
<svg class="a" style="left:964px;top:682px;" width="8" height="5" viewBox="0 0 8 5"><path d="M0 0.5H8L4 4.5Z" fill="#000"/></svg>
<svg class="a" style="left:122px;top:696px;" width="5" height="8" viewBox="0 0 5 8"><path d="M4.5 0V8L0.5 4Z" fill="#000"/></svg>
<svg class="a" style="left:949px;top:696px;" width="5" height="8" viewBox="0 0 5 8"><path d="M0.5 0V8L4.5 4Z" fill="#000"/></svg>
</body></html>
